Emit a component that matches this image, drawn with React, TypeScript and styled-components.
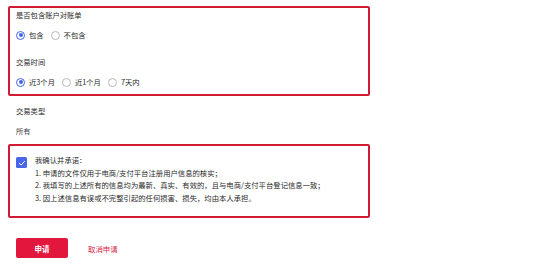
import React from 'react';
import styled, { createGlobalStyle } from 'styled-components';

const GlobalStyle = createGlobalStyle`
  html, body {
    margin: 0;
    padding: 0;
    background: #ffffff;
  }
  body {
    font-family: "Noto Sans CJK SC", "Noto Sans", sans-serif;
    color: #2b2b2b;
  }
`;

const Page = styled.div`
  width: 554px;
  height: 271px;
  box-sizing: border-box;
  padding: 6px 0 0 8px;
`;

const Highlight = styled.div<{ $pad: string }>`
  width: 362px;
  box-sizing: border-box;
  border: 2px solid #d11a34;
  border-radius: 2px;
  padding: ${(p) => p.$pad};
`;

const Field = styled.div<{ $top?: number }>`
  display: flex;
  flex-direction: column;
  gap: 6px;
  margin-top: ${(p) => p.$top ?? 0}px;
`;

const Label = styled.div`
  font-size: 7.3px;
  line-height: 14px;
  height: 14px;
  color: #2b2b2b;
`;

const Value = styled(Label)`
  color: #444444;
`;

const RadioGroup = styled.div`
  display: flex;
  align-items: center;
  gap: 7px;
  height: 14px;
`;

const RadioItem = styled.label`
  display: flex;
  align-items: center;
  gap: 4px;
  font-size: 7.3px;
  color: #2b2b2b;
`;

const Circle = styled.span<{ $checked?: boolean }>`
  width: 9px;
  height: 9px;
  box-sizing: border-box;
  border-radius: 50%;
  border: 1px solid ${(p) => (p.$checked ? '#4565e6' : '#b8b8b8')};
  display: flex;
  align-items: center;
  justify-content: center;
  &::after {
    content: '';
    width: 4px;
    height: 4px;
    border-radius: 50%;
    background: ${(p) => (p.$checked ? '#4565e6' : 'transparent')};
  }
`;

const Outside = styled.div`
  padding-left: 8px;
  margin: 8px 0 6px;
`;

const Agree = styled.div`
  display: flex;
  gap: 8px;
  align-items: flex-start;
`;

const CheckBox = styled.span`
  width: 11px;
  height: 11px;
  margin-top: 3px;
  flex: none;
  border-radius: 1.5px;
  background: #4866e8;
  display: flex;
  align-items: center;
  justify-content: center;
`;

const Terms = styled.div`
  font-size: 7.35px;
  line-height: 12.6px;
  color: #2b2b2b;
`;

const Actions = styled.div`
  display: flex;
  align-items: center;
  gap: 20px;
  margin: 20px 0 0 8px;
`;

const Submit = styled.button`
  width: 52px;
  height: 20px;
  border: none;
  border-radius: 2px;
  background: #e3163d;
  color: #ffffff;
  font-family: inherit;
  font-size: 7.5px;
  font-weight: 700;
  padding: 0;
`;

const Cancel = styled.span`
  font-size: 7.4px;
  color: #d9254a;
`;

function Radio({ checked, children }: { checked?: boolean; children: React.ReactNode }) {
  return (
    <RadioItem>
      <Circle $checked={checked} />
      {children}
    </RadioItem>
  );
}

export default function App() {
  return (
    <>
      <GlobalStyle />
      <Page>
        <Highlight $pad="0 6px 5px">
          <Field>
            <Label>是否包含账户对账单</Label>
            <RadioGroup>
              <Radio checked>包含</Radio>
              <Radio>不包含</Radio>
            </RadioGroup>
          </Field>
          <Field $top={13}>
            <Label>交易时间</Label>
            <RadioGroup>
              <Radio checked>近3个月</Radio>
              <Radio>近1个月</Radio>
              <Radio>7天内</Radio>
            </RadioGroup>
          </Field>
        </Highlight>

        <Outside>
          <Field>
            <Label>交易类型</Label>
            <Value>所有</Value>
          </Field>
        </Outside>

        <Highlight $pad="8px 6px 12px">
          <Agree>
            <CheckBox>
              <svg width="8" height="8" viewBox="0 0 8 8">
                <path d="M1.2 4.2 L3.2 6 L6.8 2" fill="none" stroke="#fff" strokeWidth="1" />
              </svg>
            </CheckBox>
            <Terms>
              <div>我确认并承诺：</div>
              <div>1. 申请的文件仅用于电商/支付平台注册用户信息的核实；</div>
              <div>2. 我填写的上述所有的信息均为最新、真实、有效的，且与电商/支付平台登记信息一致；</div>
              <div>3. 因上述信息有误或不完整引起的任何损害、损失，均由本人承担。</div>
            </Terms>
          </Agree>
        </Highlight>

        <Actions>
          <Submit>申请</Submit>
          <Cancel>取消申请</Cancel>
        </Actions>
      </Page>
    </>
  );
}
